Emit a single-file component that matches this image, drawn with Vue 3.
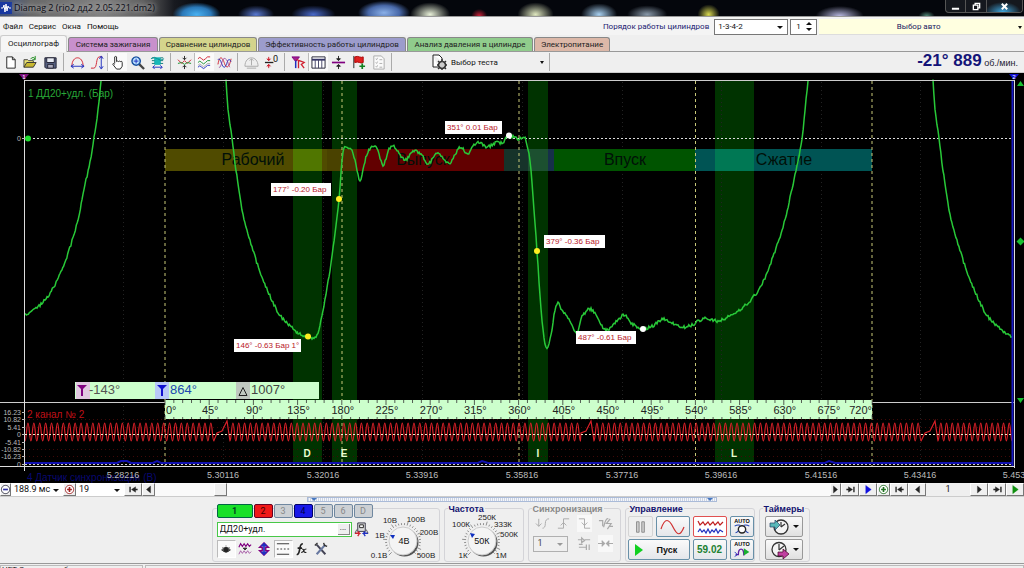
<script setup>
import { h, ref } from 'vue'

const R = '#d02030', B = '#2030c0', K = '#222', T = '#18b8b8', G = '#aaa', P = '#800080', W = '#fff'

// each shape: [path, stroke, fill, stroke width]
const icons = {
  page: [['M4 2h6l3 3v9H4z', K, W], ['M10 2v3h3', K]],
  open: [['M1 13V5h4l1 1h5v2', '#444', '#e8e070'], ['M1 13l3-5h10l-3 5z', '#333', '#c8b830'], ['M8 4q3-3 5 0M13 1v4h-3', '#1a8a1a']],
  save: [['M2 3h12v11H3l-1-1z', '#223', '#556080'], ['M4 3h8v5H4z', '#223', '#e8ecf4'], ['M5 10h6v4H5z', '#223', '#aab']],
  arc: [['M2 12C2 0 14 0 14 12', R], ['M1 12h14M4 10l-3 2 3 2M12 10l3 2-3 2', B]],
  rise: [['M1 14h3C8 14 6 2 10 2h3', R], ['M12 2v12M10 4l2-3 2 3M10 12l2 3 2-3', B]],
  hand: [['M5 9V2q1-1 2 0v5q1-1 2 0 1-1 2 0 2-1 2 1v4l-2 3H7L3 10q0-2 2 0', K, W]],
  zoom: [['M9.500 9.500L15 15', '#444', 'none', 2.4], ['M6.500 2a4.500 4.500 0 1 0 .1 0', '#1850a0', '#b8e0ff', 1.6], ['M4 6.500h5M6.500 4v5', B]],
  teal: [['M5 3h6v7H5z', T, T], ['M2 3h3M2 6h3M2 9h3M11 3h3M11 6h3M11 9h3', '#107878'], ['M1 4q4-3 7 0t7 0', '#0a9090'], ['M3 13h10M5 11l-2 2 2 2M11 11l2 2-2 2', B]],
  cross: [['M8 1v4M6 3l2 2 2-2M8 15v-4M6 13l2-2 2 2', '#222'], ['M1 5l4 4 3-3 3 3 4-4', R], ['M1 9l4-1 3 2 3-2 4 1', '#189030']],
  waves: [['M1 4q2-3 4 0t4 0 5-2', R], ['M1 8q2-3 4 0t4 0 5-2', '#189030'], ['M1 13q2-3 4 0t4 0 5-2', B], ['M1 11q2-3 4 0t4 0 5-2', '#777', 'none', .6]],
  mixed: [['M1 10C3-1 6 3 8 9s5 5 7-5', R], ['M1 5c3-4 4 9 7 8s3-13 7-6', B], ['M2 13c3 2 3-12 7-9s2 7 5 9', '#903090', 'none', .8]],
  dome: [['M1 12C1 0 15 0 15 12z', G, '#eee'], ['M8 4v7M6 6l2-2 2 2M3 14h10', G]],
  zero: [['M1 8h9', K, 'none', 1.4], ['M5 2v4M3 4l2 2 2-2M5 14v-4M3 12l2-2 2 2', R, R]],
  flagY: [['M1 2h8L5 7z', P, '#a02090'], ['M5 6v8', B, 'none', 1.6], ['M6 5l8 3-3 2 3 4M8 6v8', R, 'none', 1.4]],
  grid: [['M1 2h14v12H1z', '#223', W], ['M1 5h14', '#336', '#336', 2], ['M4.500 5v9M8 5v9M11.500 5v9', '#446']],
  split: [['M1 8h14', P, 'none', 1.8], ['M8 1v4M8 15v-4', K], ['M6 4h4L8 6zM6 12h4l-2-2z', K, K]],
  flag: [['M3 1v13', K], ['M4 2q3-1 5 0t4 0v6q-2 1-4 0t-5 0z', '#a00', '#e02020'], ['M9 12h6M12 9v6', '#108020', 'none', 1.8]],
  list: [['M3 1h8l3 3v11H3z', '#aaa', '#fafafa'], ['M5 4l1 1 1-2M5 8l1 1 1-2M5 12l1 1 1-2M9 5h3M9 9h3M9 13h3', '#999', 'none', .8]],
  test: [['M2 1h6l3 3v3M2 1v12h5', K, W], ['M11 7.500a3.500 3.500 0 1 0 .1 0', '#333', '#ccc', 1.6], ['M11 5v2M11 14v2M6 11h2M14 11h2M7 7l2 2M13 13l2 2M15 7l-2 2M9 13l-2 2', '#333', 'none', 1.4]],
  minus: [['M8 2a6 6 0 1 0 .1 0', '#334', W, 1.4], ['M4.500 8h7', '#3030a0', 'none', 2.4]],
  plus: [['M8 2a6 6 0 1 0 .1 0', '#a02020', W, 1.4], ['M4.500 8h7M8 4.500v7', '#a02020', 'none', 2.4]],
  plusG: [['M8 2a6 6 0 1 0 .1 0', '#207020', W, 1.4], ['M4.500 8h7M8 4.500v7', '#207020', 'none', 2.4]],
  first: [['M3 4v8M9 8h5', K, 'none', 2], ['M11 4v8L5 8z', K, K, .5]],
  prev: [['M11 3v10L5 8z', K, K, .5]],
  next: [['M5 3v10l6-5z', K, K, .5]],
  last: [['M13 4v8M2 8h5', K, 'none', 2], ['M5 4v8l6-4z', K, K, .5]],
  nextB: [['M4 2v12l8-6z', '#1010e0', '#1010e0', .5]],
  nextG: [['M4 2v12l8-6z', '#109010', '#109010', .5]],
  connect: [['M4 1h8v9H4z', '#334', '#ddd'], ['M6 3h4v3H6z', K, W], ['M1 12h5l-2-2M6 12l-2 3', R, 'none', 1.4], ['M15 12h-5l2-2M10 12l2 3', B, 'none', 1.4], ['M3 8L1 12M13 8l2 4', '#555']],
  eye: [['M3 9q5-6 10 0-5 5-10 0z', '#333', '#777'], ['M8 6.500a2.500 2.500 0 1 0 .1 0', K, K], ['M4 6l1 1M8 4v1M12 6l-1 1', '#555']],
  shift: [['M1 6l2-4 2 3 2-3 2 3 2-3 2 3 2-2', P, 'none', 1.3], ['M6 7h4L8 9z', K, K], ['M1 14l2-4 2 3 2-3 2 3 2-3 2 3 2-2', '#a050a0', 'none', 1]],
  updown: [['M8 1L3 6h3v4H3l5 5 5-5h-3V6h3z', P, W, 1.6], ['M8 3v10M5 5l3-3 3 3M5 11l3 3 3-3', B, 'none', 2]],
  lines: [['M1 2h14M1 14h14', K], ['M1 8h2M5 8h2M9 8h2M13 8h2', K]],
  fx: [['M2 14q2 1 3-4l1-5q1-3 3-3M3 7h5', K, 'none', 1.8], ['M8 8q2 0 2 2t3 2M13 8q-2 0-3 2t-3 2', K, 'none', 1.3]],
  tools: [['M3 3l10 11', '#445', 'none', 2.2], ['M13 3L3 14', '#6878a0', 'none', 2.4], ['M1 4l3-3M11 1l1 3 3 1', '#333', 'none', 1.6]],
  s1: [['M1 8l3 3 3-3M4 3v8M8 13q3 0 3-5t4-5', G]],
  s2: [['M2 13h6V3h6M5 10l3-3 3 3', G]],
  s3: [['M2 3h6v10h6M5 7l3 3 3-3', G]],
  s4: [['M1 5h4v6M6 12q2-10 5-9M13 3l-4 5h5l-4 6M12 11h4', G, 'none', 1.3]],
  s5: [['M1 4h4M5 2v5l3-2zM8 4h6M2 12h8M10 9v6M13 9v6M2 9h4', G, 'none', 1.3]],
  s6: [['M0 8h6M4 5l3 3-3 3M16 8h-6M12 5L9 8l3 3', G, G, 1.2]],
  pause: [['M4 2h3v12H4zM10 2h3v12h-3z', '#888', '#ccc']]
}
const Icon = ({ name }) => h('svg', { viewBox: '0 0 16 16', 'aria-hidden': 'true' },
  icons[name].map(([d, s, f = 'none', w = 1]) => h('path', { d, stroke: s, fill: f, 'stroke-width': w })))

const menus = ['Файл', 'Сервис', 'Окна', 'Помощь']
const tabs = [
  ['Осциллограф', 't0'], ['Система зажигания', 't1'], ['Сравнение цилиндров', 't2'],
  ['Эффективность работы цилиндров', 't3'], ['Анализ давления в цилиндре', 't4'], ['Электропитание', 't5']
]
const tools = [
  ['page', 'open', 'save'], ['arc', 'rise'], ['hand', 'zoom', 'teal'], ['cross', 'waves', 'mixed'],
  ['dome', 'zero'], ['flagY', 'grid', 'split', 'flag', 'list']
]
const pressed = ['hand', 'waves', 'grid']

// pressure trace
const noise = i => { const v = Math.sin(i * 127.1) * 43758.5; return v - Math.floor(v) - 0.5 }
function smooth(pts, amp) {
  const out = []
  for (let i = 0; i < pts.length - 1; i++) {
    const p0 = pts[i - 1] || pts[i], p1 = pts[i], p2 = pts[i + 1], p3 = pts[i + 2] || p2
    const n = Math.max(2, Math.round(p2[0] - p1[0]))
    for (let k = 0; k < n; k++) {
      const t = k / n
      const f = j => 0.5 * (2 * p1[j] + (p2[j] - p0[j]) * t + (2 * p0[j] - 5 * p1[j] + 4 * p2[j] - p3[j]) * t * t + (3 * p1[j] - p0[j] - 3 * p2[j] + p3[j]) * t * t * t)
      out.push(f(0).toFixed(1) + ',' + (f(1) + noise(i * 31 + k) * amp).toFixed(1))
    }
  }
  out.push(pts[pts.length - 1].join(','))
  return out.join(' ')
}
const traces = [
  smooth([[25, 315], [35, 309], [45, 300], [55, 285], [61, 272], [66, 260], [78, 220], [83, 193], [90, 163], [94, 138], [98, 110], [101, 81]], 3),
  smooth([[226, 81], [228, 110], [232, 138], [236, 170], [243, 215], [252, 247], [262, 277], [278, 312], [292, 328], [300, 334], [308, 337], [313, 338], [318, 332], [323, 310], [330, 270], [335, 233], [339, 199], [341, 173], [343, 153], [346, 147], [352, 150], [356, 165], [360, 180], [364, 165], [368, 152], [376, 147], [383, 165], [389, 149], [395, 147], [402, 158], [407, 159], [414, 151], [422, 155], [428, 164], [438, 153], [449, 163], [460, 147], [467, 154], [477, 142], [487, 147], [497, 142], [502, 143], [509, 136], [518, 139], [524, 137], [527, 145], [530, 160], [533, 197], [537, 251], [541, 310], [544, 337], [547, 349], [552, 330], [554, 313], [558, 303], [562, 310], [568, 317], [576, 333], [582, 317], [590, 309], [597, 317], [606, 330], [615, 323], [624, 315], [630, 322], [637, 327], [643, 329], [653, 326], [663, 319], [672, 323], [682, 327], [692, 325], [705, 318], [717, 321], [728, 317], [740, 310], [755, 295], [765, 278], [773, 257], [783, 227], [790, 198], [796, 170], [802, 138], [805, 110], [808, 81]], 3),
  smooth([[933, 81], [935, 110], [939, 138], [943, 170], [950, 215], [959, 247], [969, 277], [985, 312], [999, 328], [1013, 337]], 3)
]
// crank sensor: toothed wheel with a missing-tooth gap
const segs = [[25, 213.5], [230, 580], [594, 920.5], [938, 1012]]
const crank = (() => {
  let d = ''
  segs.forEach(([a, b], i) => {
    const n = Math.round((b - a) / 5.85), p = (b - a) / n
    d += i ? ` L${a - 13} 433 L${a - 8} 431 L${a - 3} 421 L${a} 441` : `M${a} 441`
    for (let k = 0; k < n; k++) {
      d += ` c${(p * .22).toFixed(2)} 0 ${(p * .28).toFixed(2)} -18 ${(p / 2).toFixed(2)} -18 s${(p * .28).toFixed(2)} 18 ${(p / 2).toFixed(2)} 18`
    }
  })
  return d
})()
const bands = [[293, 29], [332, 25], [528, 20], [715, 39]]
const cycles = [165, 342, 519, 695.5, 872]
const strokes = [
  [165, 128, '#504b00'], [293, 29, '#507600'], [322, 5, '#504b00'], [327, 15, '#4a4200'], [342, 15, '#503000'], [357, 147, '#620000'],
  [504, 24, '#16332a'], [528, 20, '#1c5030'], [548, 6, '#16304a'], [554, 141, '#005400'], [695, 20, '#005454'], [715, 39, '#007854'], [754, 118, '#005454']
]
const names = [['Рабочий', 253], ['Выпуск', 423], ['Впуск', 625], ['Сжатие', 784]]
const times = [['5.28216', 123], ['5.30116', 223], ['5.32016', 323], ['5.33916', 422], ['5.35816', 522], ['5.37716', 622], ['5.39616', 721], ['5.41516', 821], ['5.43416', 920]]
const volts = [['16.23', 415], ['10.82', 422], ['5.41', 430], ['0', 437], ['-5.41', 445], ['-10.82', 452], ['-16.23', 459], ['0', 467]]
const notes = [
  ['351° 0.01 Бар', 445, 121, 57], ['177° -0.20 Бар', 271, 183, 60], ['146° -0.63 Бар 1°', 234, 339, 67],
  ['379° -0.36 Бар', 544, 235, 61], ['487° -0.61 Бар', 576, 331, 60]
]
const dots = [[509, 135.500, '#fff'], [339, 199, '#ffee20'], [308, 336.500, '#ffee20'], [537, 251, '#ffee20'], [643, 329, '#fff']]
const events = [['D', 307], ['E', 344], ['I', 538], ['L', 734]]
const ticks = Array.from({ length: 81 }, (_, i) => [165 + i * 8.84, i % 5 === 0])
const angles = Array.from({ length: 15 }, (_, i) => [(i + 1) * 45, 165 + (i + 1) * 44.2])

const channels = [['1', 'c1'], ['2', 'c2'], ['3', ''], ['4', 'c4'], ['5', ''], ['6', ''], ['D', '']]
const chTools = ['eye', 'shift', 'updown', 'lines', 'fx', 'tools']
const knobs = [
  { title: '', value: '4В', marks: [['10В', 20, 10], ['100В', 46, 9], ['1В', 10, 25], ['200В', 59, 22], ['0.1В', 9, 45], ['500В', 56, 45]] },
  { title: 'Частота', value: '50К', marks: [['100К', 12, 14], ['250К', 38, 7], ['333К', 54, 14], ['500К', 60, 24], ['1К', 14, 45], ['1М', 52, 45]] }
]
const rim = Array.from({ length: 28 }, (_, i) => {
  const a = (135 + i * 10) * Math.PI / 180, c = Math.cos(a), s = Math.sin(a), r = i % 5 ? 18 : 20
  return `M${(33 + c * 16).toFixed(1)} ${(31 + s * 16).toFixed(1)}L${(33 + c * r).toFixed(1)} ${(31 + s * r).toFixed(1)}`
}).join('')
const sensor = ref('ДД20+удл.')
</script>

<template>
  <div class="app">
    <header class="titlebar">
      <svg class="logo" viewBox="0 0 12 12"><rect width="12" height="12" fill="#1838a0" /><path d="M1 6h2l1-3 1 7 1-8 1 7 1-5 1 2h2" fill="none" stroke="#fff" /></svg>
      <h1>Diamag 2 (rio2 дд2 2.05.221.dm2)</h1>
      <div class="winbtns">
        <button aria-label="Свернуть"><svg viewBox="0 0 10 10"><path d="M1 7.500h8" stroke="#fff" stroke-width="2.4" /></svg></button>
        <button aria-label="Развернуть"><svg viewBox="0 0 10 10"><path d="M3.500 3V1.500h5v5H7M1.500 3.500h5v5h-5z" stroke="#fff" stroke-width="1.5" fill="none" /></svg></button>
        <button class="close" aria-label="Закрыть"><svg viewBox="0 0 10 10"><path d="M2 2l6 6M8 2L2 8" stroke="#fff" stroke-width="2.2" /></svg></button>
      </div>
    </header>

    <div class="menurow">
      <nav><a v-for="m in menus" :key="m" href="#">{{ m }}</a></nav>
      <label class="order" for="order">Порядок работы цилиндров</label>
      <span class="sel ordersel"><select id="order"><option>1-3-4-2</option></select></span>
      <span class="spin"><input type="text" value="1" aria-label="Цилиндр"><span><button class="up" aria-label="Больше"></button><button class="dn" aria-label="Меньше"></button></span></span>
      <button class="auto">Выбор авто</button>
    </div>

    <div class="tabs"><button v-for="[t, c] in tabs" :key="c" :class="c">{{ t }}</button></div>

    <div class="toolbar">
      <div v-for="(g, i) in tools" :key="i" class="grp">
        <button v-for="n in g" :key="n" :class="{ on: pressed.includes(n) }" :aria-label="n"><Icon :name="n" /><sup v-if="n === 'zero'">0</sup></button>
      </div>
      <button class="test"><Icon name="test" /><span>Выбор теста</span></button>
      <output class="rpm"><b>-21° 889</b> об./мин.</output>
    </div>

    <svg class="scope" viewBox="0 73 1024 410">
      <rect y="73" width="1024" height="410" fill="#000" />
      <rect v-for="b in bands" :key="b[0]" :x="b[0]" y="81" :width="b[1]" height="384" fill="#003300" />
      <path v-for="t in times" :key="t[1]" :d="`M${t[1]}.500 82V466`" stroke="#222" stroke-dasharray="1 3" />
      <path d="M25 419.500H1013M25 427.500H1013M25 449.500H1013M25 456.500H1013" stroke="#400808" stroke-dasharray="1 3" />
      <path d="M25 138.500H1013" stroke="#ddd" stroke-dasharray="2 2" />
      <rect v-for="s in strokes" :key="s[0]" :x="s[0]" y="149" :width="s[1]" height="22" :fill="s[2]" />
      <text v-for="n in names" :key="n[0]" class="phase" :x="n[1]" y="165">{{ n[0] }}</text>
      <path v-for="c in cycles" :key="c" :d="`M${c} 81V466`" stroke="#c8c878" stroke-dasharray="3 3" />
      <polyline v-for="(t, i) in traces" :key="i" :points="t" fill="none" stroke="#28c838" stroke-width="1.5" />
      <text x="28" y="97" class="ch" fill="#28a838">1 ДД20+удл. (Бар)</text>
      <path d="M24 80.500H1014M0 402.500H165M872 402.500H1014" stroke="#ccc" />
      <path :d="crank" fill="none" stroke="#d82028" stroke-width="1.200" />
      <text x="27" y="418" class="ch" fill="#c01018">2 канал № 2</text>
      <path d="M25 434.500H1013" stroke="#eec" stroke-dasharray="2 2" />
      <path d="M25 463H117l4-2h6l4 2H153l4-2 4 2H478l4-2 6 2H825l4-2 6 2H1013" fill="none" stroke="#1010b0" stroke-width="2" />
      <path d="M25 464.500H1013" stroke="#ccc" stroke-dasharray="2 2" />
      <path d="M0 466.500H1014" stroke="#ddd" />
      <path d="M24.500 80V471" stroke="#ddd" />
      <path d="M1012.500 81V466" stroke="#1818c0" stroke-width="2" /><path d="M1014.500 80V468" stroke="#ddd" />
      <path d="M22 412.500h3M22 419.500h3M22 427.500h3M22 434.500h3M22 442.500h3M22 449.500h3M22 456.500h3M22 464.500h3M22 138.500h3" stroke="#bbb" />
      <text v-for="(v, i) in volts" :key="i" class="volt" x="21" :y="v[1]">{{ v[0] }}</text>
      <text class="volt" x="21" y="141">0</text>
      <circle cx="28" cy="138.500" r="3" fill="#20e030" />
      <text x="27" y="481" class="ch" fill="#080870">4 Датчик синхронизации (В)</text>
      <text v-for="t in times" :key="t[0]" class="time" :x="t[1]" y="478">{{ t[0] }}</text>
      <text class="time" x="1019" y="478">5.45316</text>
      <path d="M19 74h10l-5 6z" fill="#801080" /><text x="24" y="79" class="tiny">1</text>
      <path d="M1009 74h10l-5 6z" fill="#1010d0" /><text x="1014" y="79" class="tiny">2</text>
      <path d="M1017 86h7l-3.500-5zM1017 398h7l-3.500 5z" fill="#18c030" /><path d="M1016.500 241.500l4-4 4 4-4 4z" fill="#18c030" />
      <text v-for="e in events" :key="e[0]" class="event" :x="e[1]" y="457">{{ e[0] }}</text>

      <g v-for="n in notes" :key="n[0]">
        <rect :x="n[1]" :y="n[2]" :width="n[3]" height="13" fill="#fff" />
        <text class="note" :x="n[1] + 2" :y="n[2] + 9">{{ n[0] }}</text>
      </g>
      <circle v-for="d in dots" :key="d[0]" :cx="d[0]" :cy="d[1]" r="3" :fill="d[2]" />

      <rect x="75" y="382" width="244" height="17" fill="#ccffcc" />
      <rect x="76" y="382" width="14" height="17" fill="#e0c8e0" /><path d="M77 385h10l-4 4v7h-2v-7z" fill="#800080" />
      <rect x="155" y="382" width="14" height="17" fill="#b8c8f8" /><path d="M157 385h10l-4 4v7h-2v-7z" fill="#1010d0" />
      <rect x="236" y="382" width="14" height="17" fill="#c0c8c0" /><path d="M239 395.500h8l-4-8z" fill="none" stroke="#222" />
      <text x="89" y="394" class="read" fill="#555">-143°</text>
      <text x="170" y="394" class="read" fill="#2048b0">864°</text>
      <text x="251" y="394" class="read" fill="#444">1007°</text>

      <rect x="165" y="400" width="707" height="19" fill="#ccffcc" />
      <path v-for="t in ticks" :key="t[0]" :d="`M${t[0]} 400v${t[1] ? 5 : 3}M${t[0]} 419v${t[1] ? -4 : -2}`" stroke="#333" stroke-width=".8" />
      <text x="166" y="414" class="deg s">0°</text>
      <text v-for="a in angles" :key="a[0]" class="deg" :x="a[1] + 1" y="414">{{ a[0] }}°</text>
      <text x="872" y="414" class="deg e">720°</text>
    </svg>

    <div class="scroll">
      <button class="w11" aria-label="Сжать"><Icon name="minus" /></button>
      <span class="sel scalesel"><select aria-label="Развёртка"><option>188.9 мс</option></select></span>
      <button class="w13" aria-label="Растянуть"><Icon name="plus" /></button>
      <span class="sel numsel"><select aria-label="Масштаб"><option>19</option></select></span>
      <button class="w18" aria-label="В начало"><Icon name="first" /></button>
      <button class="w13" aria-label="Назад"><Icon name="prev" /></button>
      <div class="track"><button class="thumb" aria-label="Позиция"></button></div>
      <button class="w11" aria-label="Вперёд"><Icon name="next" /></button>
      <button class="w18" aria-label="В конец"><Icon name="last" /></button>
      <button class="w18" aria-label="Воспроизвести"><Icon name="nextB" /></button>
      <button class="w13" aria-label="Добавить"><Icon name="plusG" /></button>
      <button class="w18" aria-label="Первый кадр"><Icon name="first" /></button>
      <button class="w18" aria-label="Предыдущий кадр"><Icon name="prev" /></button>
      <span class="frame">1</span>
      <button class="w18" aria-label="Следующий кадр"><Icon name="next" /></button>
      <button class="w18" aria-label="Последний кадр"><Icon name="last" /></button>
      <button class="w18" aria-label="Пуск кадров"><Icon name="nextG" /></button>
    </div>

    <div class="splitter"><div><i></i><i></i></div></div>

    <main class="panels">
      <section class="p1">
        <div class="chan">
          <div class="chs"><button v-for="[n, c] in channels" :key="n" :class="c">{{ n }}</button></div>
          <div class="sensor"><span class="box"><input v-model="sensor" aria-label="Датчик"><button>...</button></span><Icon name="connect" /></div>
          <div class="ctools"><button v-for="n in chTools" :key="n" :class="{ on: n === 'eye' || n === 'lines' }" :aria-label="n"><Icon :name="n" /></button></div>
        </div>
        <svg class="knob" viewBox="0 0 68 56">
          <path :d="rim" stroke="#777" stroke-width=".8" />
          <circle cx="34.500" cy="32.500" r="14" fill="#555" /><circle cx="33" cy="31" r="14" fill="#f4f4f4" stroke="#ccc" />
          <path d="M20 25l5 0-2 4z" fill="#1030c0" />
          <text x="34" y="34" class="kv">{{ knobs[0].value }}</text>
          <text v-for="m in knobs[0].marks" :key="m[0]" :x="m[1]" :y="m[2] + 3" class="km">{{ m[0] }}</text>
        </svg>
      </section>
      <section class="p2">
        <h2>Частота</h2>
        <svg class="knob" viewBox="-5 0 78 56">
          <path :d="rim" stroke="#777" stroke-width=".8" />
          <circle cx="34.500" cy="32.500" r="14" fill="#555" /><circle cx="33" cy="31" r="14" fill="#f4f4f4" stroke="#ccc" />
          <path d="M21 23l5 1-3 4z" fill="#1030c0" />
          <text x="33" y="34" class="kv">{{ knobs[1].value }}</text>
          <text v-for="m in knobs[1].marks" :key="m[0]" :x="m[1]" :y="m[2] + 3" class="km">{{ m[0] }}</text>
        </svg>
      </section>
      <section class="p3">
        <h2 class="dim">Синхронизация</h2>
        <div class="sync">
          <Icon name="s1" /><Icon name="s2" /><Icon name="s3" class="lit" /><Icon name="s4" />
          <span class="sel syncsel"><select aria-label="Канал синхронизации" disabled><option>1</option></select></span>
          <Icon name="s5" /><Icon name="s6" class="lit" />
        </div>
      </section>
      <section class="p4">
        <h2>Управление</h2>
        <div class="ctl">
          <button class="pause" aria-label="Пауза"><Icon name="pause" /></button>
          <button class="sine" aria-label="Синус"><svg viewBox="0 0 32 18"><path d="M4 11C8-1 12 1 16 9s7 10 11 0" fill="none" stroke="#d03030" stroke-width="1.200" /></svg></button>
          <button class="red" aria-label="Сигналы"><svg viewBox="0 0 32 18"><path d="M4 3l2 4 3-3 2 3 3-3 2 3 3-3 2 3 3-3 2 3 3-3" fill="none" stroke="#c02020" stroke-width="1.200" /><path d="M4 14l2-3 2 3 2-2 2 3 2-4 2 4 2-3 2 2 2-3 2 4 2-3 3 2" fill="none" stroke="#2030c0" stroke-width="1.200" /></svg></button>
          <button aria-label="Авто шкала"><svg viewBox="0 0 24 20"><text x="12" y="7" class="at">AUTO</text><circle cx="12" cy="13.500" r="4" fill="#fff" stroke="#222" stroke-width="1.500" /><path d="M4 10q3-2 6-1M20 10q-3-2-6-1M5 17q2 0 3-2M19 17q-2 0-3-2" fill="none" stroke="#2040b0" stroke-width="1.200" /></svg></button>
          <button class="start"><svg viewBox="0 0 8 12"><path d="M0 0v12l8-6z" fill="#10d020" /></svg><span>Пуск</span></button>
          <output>59.02</output>
          <button aria-label="Авто пуск"><svg viewBox="0 0 24 20"><text x="12" y="7" class="at">AUTO</text><path d="M5 16h3q0-6 3-6t3 7" fill="none" stroke="#6020a0" stroke-width="1.500" /><path d="M14 9v8l6-4z" fill="#18b030" /><path d="M4 13l3 3-3 2" fill="none" stroke="#2030c0" /></svg></button>
        </div>
      </section>
      <section class="p5">
        <h2>Таймеры</h2>
        <div class="tm">
          <button aria-label="Таймер запуска"><svg viewBox="0 0 22 18"><circle cx="13" cy="9" r="7" fill="#f4f4f4" stroke="#333" stroke-width="1.300" /><path d="M13 9V4M13 9l4-3" stroke="#333" stroke-width="1.200" /><path d="M2 5h5V2l5 5-5 5V9H2z" fill="#58b8b8" stroke="#246" stroke-width=".7" /></svg></button>
          <button aria-label="Таймер остановки"><svg viewBox="0 0 22 18"><circle cx="11" cy="8.500" r="7" fill="#f4f4f4" stroke="#333" stroke-width="1.300" /><path d="M11 9V3M11 9l5-4" stroke="#333" stroke-width="1.200" /><path d="M10 11h5V8l6 5-6 5v-3h-5z" fill="#c040a0" stroke="#402" stroke-width=".7" /></svg></button>
        </div>
      </section>
    </main>

    <footer class="status"><span>НЕТ Связи с прибором</span><span></span></footer>
  </div>
</template>

<style>
html, body { margin: 0; background: #efefef; overflow: hidden; }
</style>

<style scoped>
.app { display: flex; flex-direction: column; height: 100vh; overflow: hidden; background: #efefef; color: #111; font: 8px/11px Roboto, "Liberation Sans", sans-serif; }
.app * { box-sizing: border-box; }
button, input, select, output { font: inherit; color: inherit; margin: 0; padding: 0; border: 0; background: none; border-radius: 0; }
button { display: flex; align-items: center; justify-content: center; white-space: nowrap; }
a { color: inherit; text-decoration: none; }
svg { display: block; flex: none; }
h1, h2 { margin: 0; }

.titlebar { flex: none; display: flex; align-items: center; height: 17px; border-bottom: 1px solid #999; background:
  radial-gradient(ellipse 24px 12px at 19.2% 90%, #48b0f0, #2a78b8 60%, transparent 100%),
  radial-gradient(ellipse 18px 9px at 25% 90%, #5878d0, transparent),
  radial-gradient(ellipse 22px 9px at 30.6% 90%, #4868c8, transparent),
  radial-gradient(ellipse 26px 12px at 37.5% 80%, #8ab0e8, #4868a8 60%, transparent),
  radial-gradient(ellipse 20px 12px at 42% 90%, #e8f0d8, transparent),
  radial-gradient(ellipse 8px 7px at 46.800% 100%, #d02038, transparent),
  radial-gradient(ellipse 18px 12px at 52.300% 90%, #e0e8c0, transparent),
  radial-gradient(ellipse 18px 11px at 58.500% 90%, #a8d0f0, transparent),
  radial-gradient(ellipse 20px 9px at 63.200% 90%, #8898a8, transparent),
  radial-gradient(ellipse 11px 10px at 69.200% 90%, #d8d850, transparent),
  radial-gradient(ellipse 24px 10px at 82% 100%, #b8b8e0, transparent),
  radial-gradient(ellipse 8px 5px at 90.500% 100%, #508878, transparent),
  linear-gradient(90deg, #3a5080 0, #686868 3%, #808080 10%, #606060 14%, #181a20 17%, #04060c 20%, #04060c 100%); }
.logo { width: 12px; height: 12px; }
h1 { flex: 1; margin-left: 2px; font: 9px/14px "Open Sans", "Noto Sans", sans-serif; color: #0a0a14; white-space: nowrap; text-shadow: 0 0 4px #bbb, 0 0 6px #aaa; }
.winbtns { display: flex; align-self: flex-start; width: 78px; height: 13px; margin-right: 1px; border: 1px solid #555; border-top: 0; border-radius: 0 0 4px 4px; background: #15181e; overflow: hidden; }
.winbtns button { flex: 20; border-right: 1px solid #555; }
.winbtns .close { flex: 36; border: 0; background: radial-gradient(ellipse 18px 10px at 45% 100%, #40a8e0, #15181e); }
.winbtns svg { width: 9px; height: 9px; }

.menurow { flex: none; display: flex; align-items: center; height: 18px; background: #f4f4f4; padding-top: 1px; }
nav { display: flex; gap: 6px; padding-left: 3px; flex: 1; }
.order { color: #202070; margin-right: 5px; white-space: nowrap; }
.sel { position: relative; display: flex; }
.sel select { appearance: none; width: 100%; height: 100%; padding: 0 0 0 3px; outline: 0; }
.sel::after { content: ""; position: absolute; right: 4px; top: 50%; margin-top: -1px; border: 3px solid transparent; border-top-color: #111; border-bottom: 0; pointer-events: none; }
.ordersel { width: 74px; height: 16px; border: 1px solid #777; background: #fff; }
.spin { display: flex; align-items: center; width: 27px; height: 16px; margin: 0 2px; border: 1px solid #777; background: #fff; }
.spin input { width: 15px; padding-left: 5px; height: 14px; }
.spin > span { display: flex; flex-direction: column; gap: 3px; }
.up, .dn { width: 0; height: 0; border: 3px solid transparent; }
.up { border-bottom-color: #111; border-top: 0; }
.dn { border-top-color: #111; border-bottom: 0; }
.auto { position: relative; width: 20%; height: 16px; background: #ffffe0; border-bottom: 1px solid #ddd; color: #181860; padding-right: 6px; }
.auto::after, .test::after, .tm button::after { content: ""; border: 2px solid transparent; border-top: 3px solid #111; border-bottom: 0; }
.auto::after { position: absolute; right: 2px; top: 7px; }

.tabs { flex: none; display: flex; align-items: flex-end; gap: 1px; height: 17px; border-bottom: 1px solid #999; background: #efefef; }
.tabs button { height: 14px; border: 1px solid #888; border-bottom: 0; border-radius: 3px 3px 0 0; color: #222; padding: 0 3px; }
.tabs .t0 { width: 67px; height: 17px; background: #f6f6f6; border-color: #ccc; margin-bottom: -1px; padding-bottom: 1px; }
.t1 { width: 90px; background: #c890cc; }
.t2 { width: 98px; background: #d4d48c; }
.t3 { width: 148px; background: #9c9ccc; }
.t4 { width: 126px; background: #90cc8c; }
.t5 { width: 76px; background: #dcb8a8; }

.toolbar { flex: none; display: flex; align-items: center; height: 21px; background: #efefef; border-bottom: 1px solid #ccc; }
.grp { display: flex; height: 18px; }
.grp::after { content: ""; width: 1px; margin: 0 3px; background: #aaa; }
.grp:nth-child(2)::after { display: none; }
.grp button { width: 20px; }
.grp .on { background: #fafafa; border-left: 1px solid #bbb; }
.grp svg { width: 15px; height: 15px; }
.grp sup { font-size: 9px; line-height: 9px; margin: 0 0 5px -6px; }
.test { width: 155px; height: 18px; border-right: 1px solid #aaa; padding: 0 5px 0 36px; }
.test svg { width: 16px; height: 16px; margin-right: 4px; }
.test span { flex: 1; text-align: left; }
.rpm { margin-left: auto; padding-right: 6px; font: 9px/18px "Liberation Sans", sans-serif; color: #223; white-space: nowrap; }
.rpm b { font-size: 17px; color: #141478; }

.scope { width: 100%; height: auto; font-family: "Liberation Sans", sans-serif; }
.phase { font-size: 16px; fill: #001008; text-anchor: middle; }
.ch { font-size: 10px; }
.volt { font-size: 7px; fill: #bbb; text-anchor: end; }
.time { font-size: 9px; fill: #bbb; text-anchor: middle; }
.tiny { font-size: 6px; fill: #fff; text-anchor: middle; }
.event { font-size: 10px; font-weight: bold; fill: #e8ffd0; text-anchor: middle; }
.note { font-size: 8px; fill: #b81828; }
.read { font-size: 13px; }
.deg { font-size: 11px; fill: #222; text-anchor: middle; }
.deg.s { text-anchor: start; }
.deg.e { text-anchor: end; }

.scroll { flex: none; display: flex; align-items: stretch; height: 13px; background: #efefef; font-size: 9px; }
.scroll > button, .thumb { background: #efefef; border: 1px solid #fff; border-right-color: #777; border-bottom-color: #777; }
.scroll svg { width: 11px; height: 11px; }
.w11 { width: 11px; }
.w13 { width: 13px; }
.w18 { width: 18px; }
.scalesel { width: 52px; background: #fff; }
.scalesel select { padding-left: 3px; }
.numsel { width: 48px; background: #fff; }
.track { flex: 1; display: flex; background: #fafafa; padding-left: 59px; }
.thumb { width: 13px; }
.frame { width: 44px; text-align: center; line-height: 13px; }

.splitter { flex: none; height: 7px; display: flex; justify-content: center; border-top: 1px solid #ccc; }
.splitter div { display: flex; justify-content: space-between; width: 40%; height: 5px; border: 1px solid #aabbd8; background: repeating-linear-gradient(90deg, #ccd4e4 0 1px, #f4f6fa 1px 2px); }
.splitter i { margin: 0 3px; width: 0; height: 0; border: 3px solid transparent; border-top-color: #4878c0; border-bottom: 0; }

.panels { flex: none; display: flex; justify-content: center; gap: 4px; padding-right: 3px; height: 58px; margin-top: 1px; }
section { position: relative; }
section::before { content: ""; position: absolute; inset: 4px 0 0; border: 1px solid #d4d4d8; border-radius: 3px; }
section > * { position: relative; }
h2 { display: inline-block; margin-left: 4px; padding: 0 1px; background: #efefef; font: bold 9px/11px "Liberation Sans", sans-serif; color: #141470; vertical-align: top; }
h2.dim { color: #888; }
.p1 { width: 228px; display: flex; }
.p2 { width: 80px; }
.p3 { width: 93px; }
.p4 { width: 130px; }
.p5 { width: 51px; }
.chan { width: 158px; padding-left: 5px; display: flex; flex-direction: column; }
.chs { display: flex; gap: 1px; font-size: 9px; }
.chs button { flex: none; width: 19px; height: 14px; border: 1px solid #7088a0; border-radius: 2px; background: #ccd0d4; color: #888; }
.chs .c1 { width: 36px; background: #18e028; border: 1px solid #064; color: #042; font-weight: bold; }
.chs .c2 { background: #f01818; border-color: #602; color: #400; }
.chs .c4 { background: #1818e8; border-color: #006; color: #004; }
.sensor { display: flex; align-items: center; gap: 2px; margin-top: 4px; }
.box { display: flex; width: 135px; height: 15px; border: 1px solid #48c848; background: #fff; padding: 1px; }
.box input { flex: 1; min-width: 0; padding-left: 1px; font-size: 9px; outline: 0; }
.box button { width: 12px; border-right: 1px solid #888; border-bottom: 1px solid #888; background: #efefef; padding-bottom: 3px; }
.sensor svg { width: 15px; height: 15px; }
.ctools { display: flex; margin-top: 3px; }
.ctools button { width: 19px; height: 18px; }
.ctools .on { background: #fafafa; border: 1px solid #bbb; border-right-color: #fff; border-bottom-color: #fff; }
.ctools svg { width: 14px; height: 14px; }
.knob { width: 68px; height: 56px; margin-top: 6px; overflow: visible; font-family: "Liberation Sans", sans-serif; }
.p2 .knob { width: 78px; margin-top: -5px; }
.kv { font-size: 9px; text-anchor: middle; fill: #111; }
.km { font-size: 8px; text-anchor: middle; fill: #222; }
.sync { display: grid; grid-template-columns: repeat(4, 20px); justify-content: center; justify-items: center; align-items: center; gap: 3px 1px; }
.sync svg { width: 15px; height: 17px; }
.sync .lit { background: #f8f8f8; }
.syncsel { grid-column: span 2; width: 35px; height: 16px; justify-self: start; border: 1px solid #b0b0b0; color: #555; }
.syncsel select { padding-left: 4px; opacity: 1; color: #444; font-size: 9px; }
.syncsel::after { border-top-color: #999; }
.ctl { display: grid; grid-template-columns: 25px 34px 34px 24px; gap: 2px 3px; padding-left: 3px; margin-top: 1px; }
.ctl button, .ctl output { height: 21px; border: 1px solid #6890a8; border-radius: 2px; background: linear-gradient(#fafafa, #e4e6ea); }
.ctl .pause { border-color: #d4d4d4; background: #efefef; }
.ctl .pause svg { width: 14px; height: 14px; }
.ctl .sine svg, .ctl .red svg { width: 32px; height: 18px; }
.ctl .red { border-color: #e05050; background: #fff; }
.ctl .start { grid-column: span 2; justify-content: flex-start; gap: 14px; padding-left: 6px; font: bold 9px/12px "Liberation Sans", sans-serif; }
.start svg { width: 8px; height: 12px; }
.ctl button > svg { max-height: 19px; }
.ctl output { text-align: center; font: bold 10px/19px "Liberation Sans", sans-serif; color: #208030; }
.at { font: bold 6px "Liberation Sans", sans-serif; text-anchor: middle; }
.tm { display: grid; gap: 2px; padding: 0 6px; margin-top: 1px; }
.tm button { width: 38px; height: 21px; gap: 3px; border: 1px solid #999; border-radius: 2px; background: linear-gradient(#fafafa, #e0e0e0); }
.tm svg { width: 22px; height: 18px; }
.tm button::after { border-width: 3px 3px 0; }

.status { flex: none; display: flex; gap: 2px; margin-top: 1px; padding-top: 1px; border-top: 1px solid #999; line-height: 7px; }
.status span { flex: 1; height: 14px; border: 1px solid #bbb; padding-left: 1px; }
.status span:first-child { flex: none; width: 14%; }
</style>
